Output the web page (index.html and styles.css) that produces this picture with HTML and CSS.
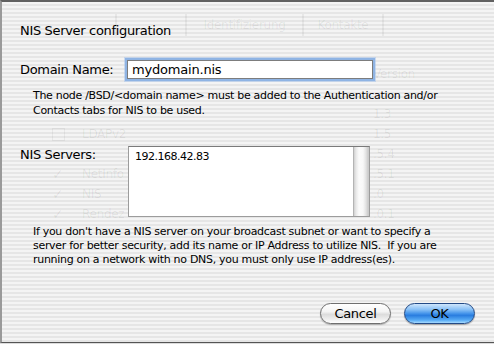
FILE: index.html
```html
<!DOCTYPE html>
<html>
<head>
<meta charset="utf-8">
<link rel="stylesheet" href="styles.css">
</head>
<body>
<div class="sheet">
  <div class="ghost" aria-hidden="true">
    <div class="ghost-tabs">
      <span class="gtab gtab-1"></span>
      <span class="gtab gtab-2">Identifizierung</span>
      <span class="gtab gtab-3">Kontakte</span>
    </div>
    <div class="ghost-names">
      <span class="gbox"></span><span>LDAPv2</span>
      <span></span><span></span>
      <span class="gchk">✓</span><span>NetInfo</span>
      <span class="gchk">✓</span><span>NIS</span>
      <span class="gchk">✓</span><span>Rendez</span>
    </div>
    <div class="ghost-versions">
      <span>Version</span>
      <span></span>
      <span>1.3</span>
      <span>1.5</span>
      <span>.5.4</span>
      <span>.5.1</span>
      <span>.0</span>
      <span>.0.1</span>
    </div>
  </div>

  <div class="content">
    <h1 class="title">NIS Server configuration</h1>

    <div class="row domain-row">
      <label class="label">Domain Name:</label>
      <div class="textfield">mydomain.nis</div>
    </div>
    <p class="note note-domain">The node /BSD/&lt;domain name&gt; must be added to the Authentication and/or<br>Contacts tabs for NIS to be used.</p>

    <div class="row servers-row">
      <label class="label">NIS Servers:</label>
      <div class="listbox">
        <div class="list-items">192.168.42.83</div>
        <div class="scrolltrack"></div>
      </div>
    </div>
    <p class="note note-servers">If you don't have a NIS server on your broadcast subnet or want to specify a<br>server for better security, add its name or IP Address to utilize NIS.&nbsp; If you are<br>running on a network with no DNS, you must only use IP address(es).</p>

    <div class="buttons">
      <button class="btn btn-cancel">Cancel</button>
      <button class="btn btn-ok">OK</button>
    </div>
  </div>
</div>
</body>
</html>
```
FILE: styles.css
```css
html, body {
  margin: 0;
  padding: 0;
  background: #dcdcdc;
}
body {
  width: 494px;
  height: 344px;
  overflow: hidden;
  font-family: "DejaVu Sans", "Liberation Sans", sans-serif;
  color: #000;
}
.sheet {
  position: relative;
  width: 492px;
  height: 340px;
  border-top: 2px solid #616161;
  border-left: 2px solid #9a9a9a;
  border-bottom: 1px solid #555;
  background: repeating-linear-gradient(to bottom, #f4f4f4 0 2px, #e6e6e6 2px 4px);
  overflow: hidden;
}
.ghost {
  position: absolute;
  left: 0;
  top: 0;
  width: 100%;
  height: 100%;
  color: rgba(0, 0, 0, 0.07);
  font-size: 12px;
  letter-spacing: -0.3px;
}
.ghost-tabs {
  position: absolute;
  left: 113px;
  top: 12px;
  display: flex;
  height: 22px;
  align-items: center;
}
.gtab {
  height: 22px;
  line-height: 22px;
  text-align: center;
  border-left: 2px solid rgba(0, 0, 0, 0.05);
}
.gtab-1 { width: 68px; }
.gtab-2 { width: 115px; }
.gtab-3 { width: 78px; border-right: 2px solid rgba(0, 0, 0, 0.05); }
.ghost-names {
  position: absolute;
  left: 50px;
  top: 122px;
  display: grid;
  grid-template-columns: 30px 60px;
  grid-auto-rows: 20px;
  align-items: center;
}
.gchk { font-size: 14px; }
.gbox {
  width: 11px;
  height: 11px;
  border: 1px solid rgba(0, 0, 0, 0.05);
}
.ghost-versions {
  position: absolute;
  left: 371px;
  top: 62px;
  display: grid;
  grid-auto-rows: 20px;
  align-items: center;
}
.content {
  position: relative;
  display: flex;
  flex-direction: column;
  padding: 21px 0 0 18px;
  height: 322px;
  box-sizing: border-box;
}
.title {
  margin: 0;
  font-size: 13px;
  font-weight: normal;
  letter-spacing: -0.33px;
  line-height: 16px;
  height: 16px;
}
.row {
  display: flex;
}
.label {
  font-size: 13px;
  letter-spacing: -0.33px;
  width: 106px;
  flex: none;
  line-height: 16px;
}
.domain-row {
  margin-top: 21px;
  align-items: center;
}
.textfield {
  flex: none;
  width: 240px;
  height: 17px;
  border: 1px solid #7d7d7d;
  background: #fff;
  box-shadow: 0 0 0 2px #8fb4e4, 0 0 0 3px rgba(160, 192, 235, 0.5);
  font-size: 13px;
  letter-spacing: -0.2px;
  line-height: 17px;
  padding-left: 4px;
  margin-left: 1px;
}
.note {
  margin: 0;
  font-size: 11px;
  letter-spacing: -0.3px;
  padding-left: 13px;
  white-space: nowrap;
}
.note-domain {
  margin-top: 9px;
  line-height: 15px;
}
.servers-row {
  margin-top: 28px;
  align-items: flex-start;
}
.servers-row .label {
  margin-top: 1px;
}
.listbox {
  flex: none;
  margin-left: 2px;
  width: 240px;
  height: 69px;
  border: 1px solid #9c9c9c;
  border-top-color: #7a7a7a;
  background: #fff;
  display: flex;
}
.list-items {
  flex: 1;
  font-size: 11px;
  letter-spacing: -0.5px;
  padding: 3px 0 0 6px;
  line-height: 13px;
}
.scrolltrack {
  width: 15px;
  border-left: 1px solid #b4b4b4;
  background: linear-gradient(to right, #d0d0d0 0, #e8e8e8 2px, #fbfbfb 5px, #f8f8f8 9px, #e2e2e2 12px, #cbcbcb 14px);
}
.note-servers {
  margin-top: 8px;
  line-height: 14px;
}
.buttons {
  margin-top: auto;
  display: flex;
  justify-content: flex-end;
  gap: 13px;
  padding-right: 19px;
}
.btn {
  font-family: "DejaVu Sans", "Liberation Sans", sans-serif;
  font-size: 13px;
  letter-spacing: -0.3px;
  height: 21px;
  border-radius: 11px;
  padding: 0;
  line-height: 19px;
  color: #000;
}
.btn-cancel {
  width: 71px;
  border: 1px solid #6f6f6f;
  background: linear-gradient(to bottom, #ffffff 0%, #f4f4f4 40%, #dcdcdc 55%, #eeeeee 80%, #ffffff 100%);
  box-shadow: 0 1px 1px rgba(0, 0, 0, 0.25);
}
.btn-ok {
  width: 71px;
  border: 1px solid #234a86;
  background: linear-gradient(to bottom, #cfe6fc 0%, #86bff6 30%, #4594ea 50%, #2a7ddf 60%, #58acf5 85%, #a6dbff 100%);
  box-shadow: 0 1px 1px rgba(0, 0, 0, 0.3);
}
```
